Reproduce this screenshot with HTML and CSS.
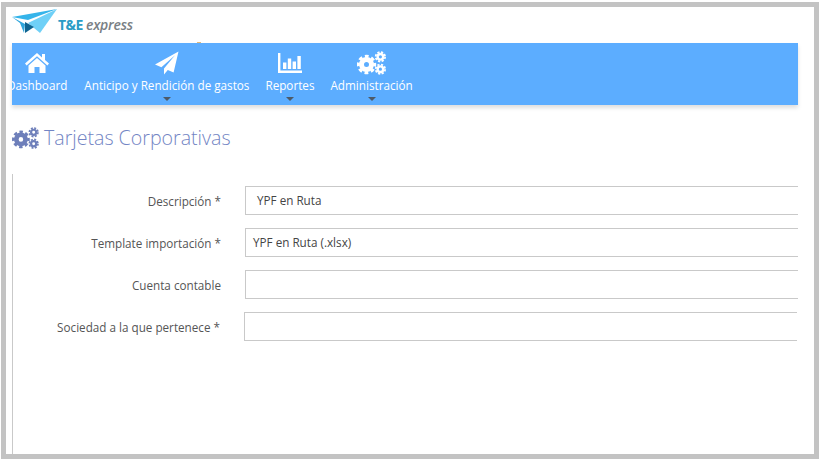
FILE: index.html
```html
<!DOCTYPE html>
<html lang="es">
<head>
<meta charset="utf-8">
<title>Tarjetas Corporativas</title>
<link rel="stylesheet" href="styles.css">
</head>
<body>
<svg class="defs" width="0" height="0" aria-hidden="true">
  <defs>
    <symbol id="cogs" viewBox="0 0 29 24">
      <g fill="none" stroke="currentColor">
        <circle cx="9.5" cy="13.5" r="5" stroke-width="5"/>
        <circle cx="9.5" cy="13.5" r="8.2" stroke-width="3" stroke-dasharray="3.7 2.74" stroke-dashoffset="1.85"/>
        <circle cx="23.4" cy="5.8" r="2.8" stroke-width="2.4"/>
        <circle cx="23.4" cy="5.8" r="4.7" stroke-width="1.8" stroke-dasharray="2.2 1.49"/>
        <circle cx="23.4" cy="18.2" r="2.8" stroke-width="2.4"/>
        <circle cx="23.4" cy="18.2" r="4.7" stroke-width="1.8" stroke-dasharray="2.2 1.49"/>
      </g>
    </symbol>
  </defs>
</svg>
<div class="frame">
  <header class="brand">
    <svg class="logo-mark" viewBox="1 0 46 26" width="46" height="26" aria-hidden="true">
      <path d="M1 9 46 1 17 12Z" fill="#35b4ea"/>
      <path d="M46 1 29 25 17 15Z" fill="#6fd0f7"/>
      <path d="M1 9 14 16 13 25 9 15Z" fill="#2fa6dc"/>
      <path d="M14 14 23 19 14 25Z" fill="#0f6490"/>
    </svg>
    <span class="logo-te">T&amp;E</span>
    <span class="logo-express">express</span>
  </header>
  <span class="speck"></span>
  <nav class="nav">
    <a class="nav-item">
      <svg class="nav-icon" viewBox="0 0 26 22" width="26" height="22" aria-hidden="true">
        <path d="M13 1 1 11.5 2.6 13.4 13 4.3 23.4 13.4 25 11.5 21 8V2H18V5.4Z" fill="#fff"/>
        <path d="M13 6 4.5 13.4V21H10.5V15H15.5V21H21.5V13.4Z" fill="#fff"/>
      </svg>
      <span>Dashboard</span>
    </a>
    <a class="nav-item has-menu">
      <svg class="nav-icon" viewBox="0 0 24 24" width="24" height="24" aria-hidden="true">
        <path d="M23.5.5 0 13.6 6.4 16.3 20 4.2 9 17.6V23.5L12.8 18.9 18.6 21.4Z" fill="#fff"/>
      </svg>
      <span>Anticipo y Rendición de gastos</span>
    </a>
    <a class="nav-item has-menu">
      <svg class="nav-icon" viewBox="0 0 24 22" width="24" height="22" aria-hidden="true">
        <path d="M0 1H2.4V18.6H24V21H0Z M5 10.5H8.4V17H5Z M9.8 6.5H13.2V17H9.8Z M14.6 9.5H18V17H14.6Z M19.4 4H22.8V17H19.4Z" fill="#fff"/>
      </svg>
      <span>Reportes</span>
    </a>
    <a class="nav-item has-menu">
      <svg class="nav-icon nav-cogs" width="29" height="24" aria-hidden="true"><use href="#cogs"/></svg>
      <span>Administración</span>
    </a>
  </nav>
  <h1 class="title">
    <svg class="title-icon" width="27" height="22" aria-hidden="true"><use href="#cogs"/></svg>
    <span>Tarjetas Corporativas</span>
  </h1>
  <form class="form">
    <div class="row">
      <label class="label">Descripción *</label>
      <div class="field field-text">YPF en Ruta</div>
    </div>
    <div class="row">
      <label class="label">Template importación *</label>
      <div class="field field-select">YPF en Ruta (.xlsx)</div>
    </div>
    <div class="row">
      <label class="label">Cuenta contable</label>
      <div class="field"></div>
    </div>
    <div class="row row-shift">
      <label class="label">Sociedad a la que pertenece *</label>
      <div class="field"></div>
    </div>
  </form>
</div>
</body>
</html>
```
FILE: styles.css
```css
* { box-sizing: border-box; }
html, body { margin: 0; padding: 0; background: #fff; overflow: hidden; }
body { font-family: "Open Sans", "Liberation Sans", sans-serif; }
.defs { position: absolute; }
.frame {
  position: relative;
  width: 818px;
  height: 457px;
  margin: 2px 0 0 1px;
  border: 5px solid #c3c3c3;
  padding-left: 6px;
  display: flex;
  flex-direction: column;
}
.brand {
  height: 36px;
  display: flex;
  align-items: flex-start;
  padding-top: 1px;
  flex: none;
}
.logo-mark { flex: none; }
.logo-te {
  margin: 8px 0 0 0;
  font-size: 14px;
  font-weight: 700;
  letter-spacing: -0.5px;
  color: #2a9cc6;
  line-height: 18px;
}
.logo-express {
  margin: 8px 0 0 3px;
  font-size: 14px;
  font-style: italic;
  font-weight: 600;
  letter-spacing: -0.2px;
  color: #7a7f85;
  line-height: 18px;
}
.speck {
  position: absolute;
  left: 191px;
  top: 35px;
  width: 4px;
  height: 1px;
  background: #e3b878;
}
.nav {
  width: 786px;
  height: 62px;
  flex: none;
  background: #5cadff;
  box-shadow: 0 3px 4px rgba(0, 0, 0, 0.13);
  display: flex;
  overflow: hidden;
}
.nav-item {
  position: relative;
  display: flex;
  flex-direction: column;
  align-items: center;
  padding: 0 8px;
  color: #fff;
  font-size: 11.7px;
  line-height: 16px;
  white-space: nowrap;
}
.nav-item:first-child { margin-left: -13px; padding-right: 9px; }
.nav-icon { height: 24px; margin-top: 8px; margin-bottom: 2px; color: #fff; }
.has-menu::after {
  content: "";
  position: absolute;
  left: 50%;
  bottom: 4px;
  margin-left: -4px;
  border: 4px solid transparent;
  border-top-color: #4d5a68;
  border-bottom-width: 0;
}
.title {
  margin: 18px 0 0;
  height: 30px;
  display: flex;
  align-items: center;
  font-size: 19.6px;
  font-weight: 300;
  line-height: 30px;
  color: #7385c4;
  white-space: nowrap;
}
.title-icon { color: #6e7fba; margin-right: 5px; flex: none; }
.form {
  margin-top: 21px;
  flex: 1;
  border-left: 1px solid #c9c9c9;
  padding-top: 12px;
  display: flex;
  flex-direction: column;
  gap: 13px;
}
.row {
  display: flex;
  align-items: center;
  height: 29px;
  gap: 24px;
}
.label {
  width: 208px;
  flex: none;
  text-align: right;
  font-size: 11.7px;
  color: #555;
  white-space: nowrap;
}
.field {
  width: 553px;
  height: 29px;
  flex: none;
  border: 1px solid #c9c9c9;
  border-right: 0;
  font-size: 11.7px;
  line-height: 27px;
  color: #444;
}
.field-text { padding-left: 11px; }
.field-select { padding-left: 7px; }
.row-shift { margin-left: -1px; }
```
